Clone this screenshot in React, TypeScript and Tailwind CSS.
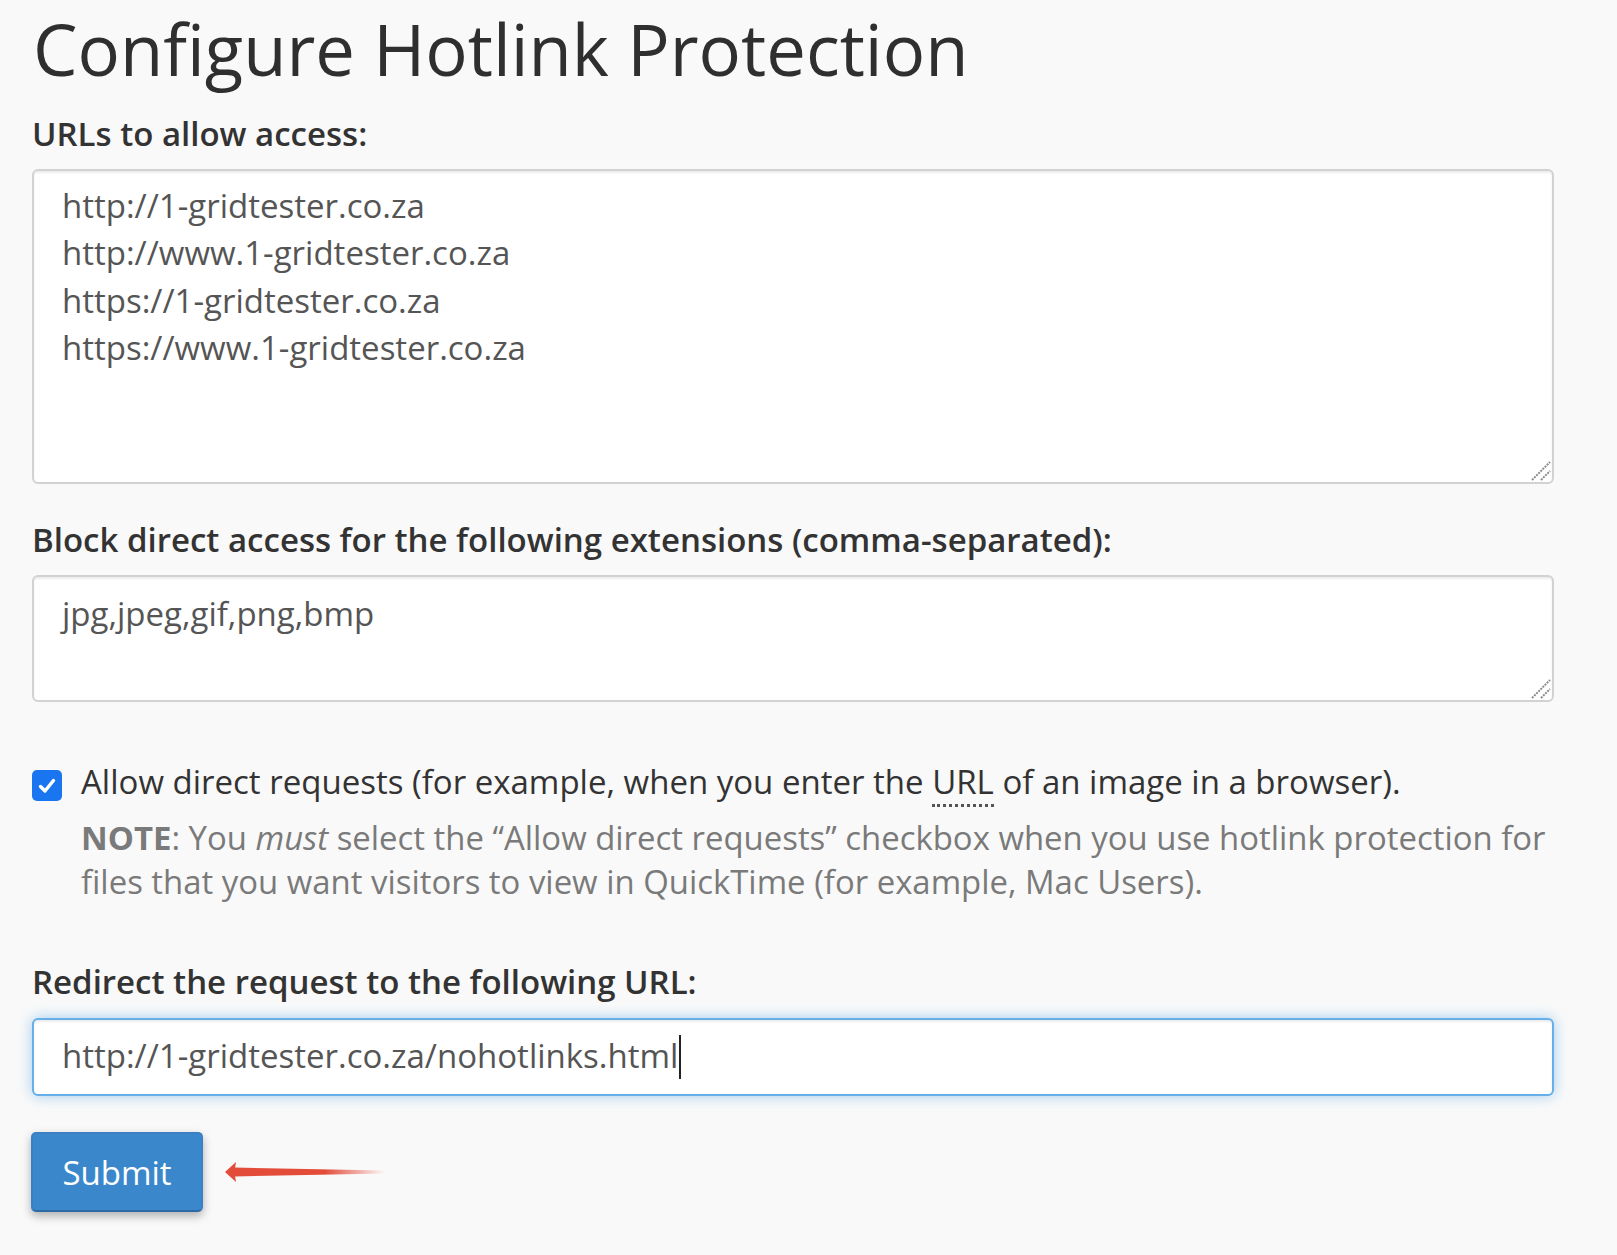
import React from 'react'

const font = "font-['Open_Sans','Liberation_Sans',sans-serif]"

function ResizeGrip() {
  return (
    <svg
      className="pointer-events-none absolute right-[3px] bottom-[3px]"
      width="20"
      height="20"
      viewBox="0 0 20 20"
    >
      <line x1="1" y1="19" x2="19" y2="1" stroke="#8a8a8a" strokeWidth="2" strokeDasharray="2 1" />
      <line x1="10" y1="19" x2="19" y2="10" stroke="#8a8a8a" strokeWidth="2" strokeDasharray="2 1" />
    </svg>
  )
}

function RedArrow() {
  return (
    <svg width="170" height="24" viewBox="0 0 170 24" className="shrink-0">
      <defs>
        <linearGradient id="shaftFade" x1="0" y1="0" x2="1" y2="0">
          <stop offset="0" stopColor="#e44c3a" stopOpacity="1" />
          <stop offset="0.6" stopColor="#e44c3a" stopOpacity="1" />
          <stop offset="1" stopColor="#e44c3a" stopOpacity="0" />
        </linearGradient>
      </defs>
      <path d="M0 12 L11 2 L10 8.5 L10 15.5 L11 22 Z" fill="#e44c3a" />
      <path d="M9 7.5 L160 10.5 L160 13.5 L9 16.5 Z" fill="url(#shaftFade)" />
    </svg>
  )
}

export default function App() {
  const urls = [
    'http://1-gridtester.co.za',
    'http://www.1-gridtester.co.za',
    'https://1-gridtester.co.za',
    'https://www.1-gridtester.co.za',
  ].join('\n')

  return (
    <div className={`min-h-screen bg-[#f9f9f9] text-[#333] ${font}`}>
      <div className="w-[1554px] pl-[32px] pt-[10px] pb-[40px]">
        <h1 className="ml-[1px] text-[70.6px] leading-[78px] font-normal text-[#2f2f2f]">
          Configure Hotlink Protection
        </h1>

        {/* Allowed URLs */}
        <label className="mt-[22px] block text-[33px] leading-[47px] font-semibold">
          URLs to allow access:
        </label>
        <div className="relative mt-[12px]">
          <textarea
            defaultValue={urls}
            spellCheck={false}
            className="block h-[315px] w-full resize-none rounded-[6px] border-2 border-[#d2d2d2] bg-white px-[28px] pt-[11px] text-[33px] leading-[47.4px] text-[#555] shadow-[inset_0_2px_2px_rgba(0,0,0,0.075)] outline-none"
          />
          <ResizeGrip />
        </div>

        {/* Extensions */}
        <label className="mt-[32px] block text-[33px] leading-[47px] font-semibold">
          Block direct access for the following extensions (comma-separated):
        </label>
        <div className="relative mt-[12px]">
          <textarea
            defaultValue="jpg,jpeg,gif,png,bmp"
            spellCheck={false}
            className="block h-[127px] w-full resize-none rounded-[6px] border-2 border-[#d2d2d2] bg-white px-[28px] pt-[13px] text-[33px] leading-[47px] text-[#555] shadow-[inset_0_2px_2px_rgba(0,0,0,0.075)] outline-none"
          />
          <ResizeGrip />
        </div>

        {/* Direct requests */}
        <div className="mt-[56px] flex items-start gap-[19px]">
          <div className="mt-[12px] flex h-[31px] w-[30px] shrink-0 items-center justify-center rounded-[5px] bg-[#1a76f0]">
            <svg width="20" height="20" viewBox="0 0 20 20">
              <path d="M3.5 10.5 L8 15 L16.5 4.5" fill="none" stroke="#fff" strokeWidth="3.4" strokeLinecap="round" strokeLinejoin="round" />
            </svg>
          </div>
          <div>
            <p className="text-[33px] leading-[47px]">
              Allow direct requests (for example, when you enter the{' '}
              <abbr title="Uniform Resource Locator" className="no-underline border-b-[3px] border-dotted border-[#555]">
                URL
              </abbr>{' '}
              of an image in a browser).
            </p>
            <p className="mt-[11px] w-[1475px] text-[32.9px] leading-[44px] text-[#7a7a7a]">
              <strong className="font-bold">NOTE</strong>: You <em>must</em> select the “Allow direct requests” checkbox when you use hotlink protection for files that you want visitors to view in QuickTime (for example, Mac Users).
            </p>
          </div>
        </div>

        {/* Redirect */}
        <label className="mt-[54px] block text-[33px] leading-[47px] font-semibold">
          Redirect the request to the following URL:
        </label>
        <div className="mt-[13px] flex h-[78px] w-full items-center rounded-[6px] border-2 border-[#66afe9] bg-white px-[28px] shadow-[inset_0_2px_2px_rgba(0,0,0,0.075),0_0_14px_rgba(102,175,233,0.6)]">
          <span className="-mt-[3px] text-[33px] leading-[47px] text-[#555]">http://1-gridtester.co.za/nohotlinks.html</span>
          <span className="ml-[1px] h-[44px] w-[2px] bg-[#222]" />
        </div>

        <div className="mt-[36px] flex items-center gap-[22px]">
          <button className="h-[80px] w-[172px] -ml-[1px] rounded-[5px] border-2 border-[#3a80c2] border-b-[#2d69a3] bg-[#3a87cc] text-[33px] leading-[47px] text-white shadow-[0_4px_10px_rgba(0,0,0,0.3)]">
            Submit
          </button>
          <RedArrow />
        </div>
      </div>
    </div>
  )
}
